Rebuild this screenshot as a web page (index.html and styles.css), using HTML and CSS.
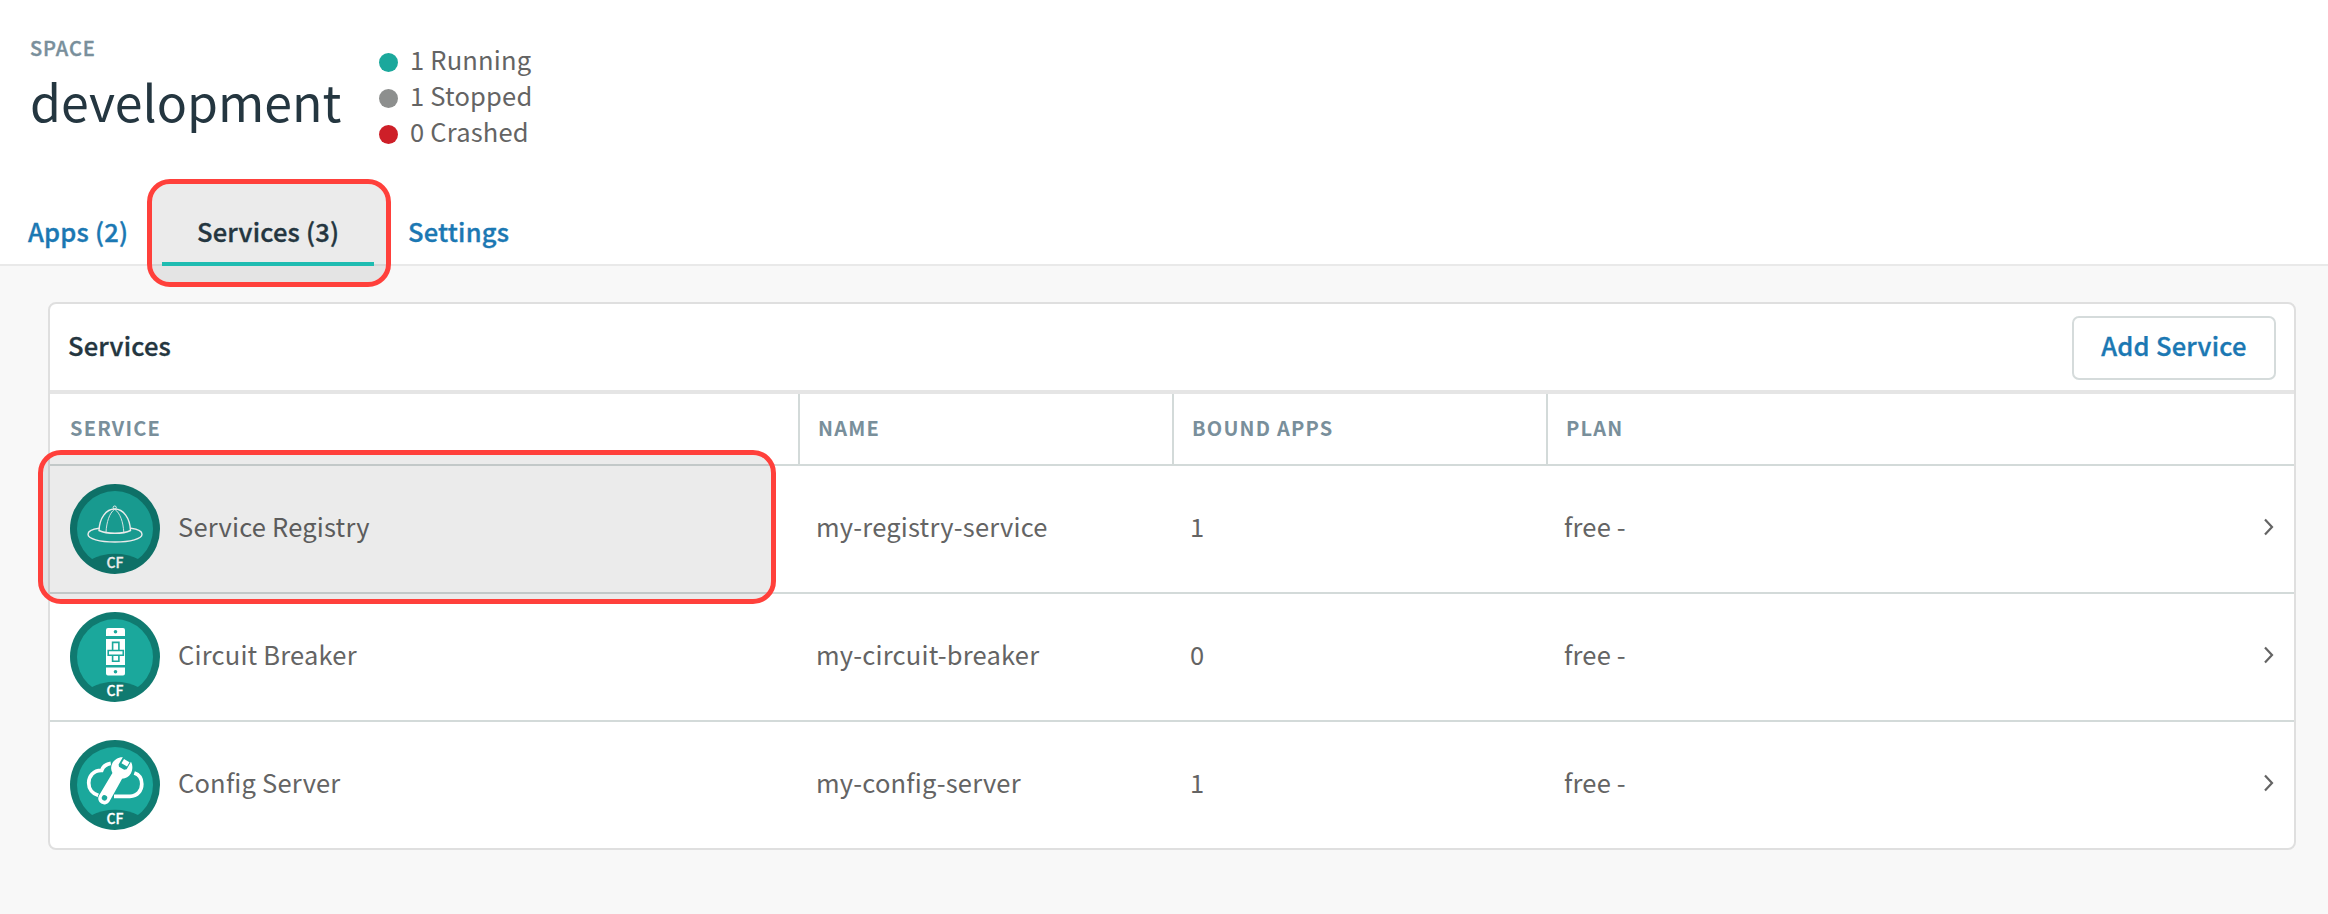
FILE: index.html
```html
<!DOCTYPE html>
<html lang="en">
<head>
<meta charset="utf-8">
<title>development</title>
<link rel="stylesheet" href="styles.css">
</head>
<body>
<header class="header">
  <div class="summary">
    <div class="space">
      <div class="space-label"><span>SPACE</span></div>
      <h1 class="space-name"><span>development</span></h1>
    </div>
    <ul class="statuses">
      <li class="status"><i class="dot dot-running"></i><span>1 Running</span></li>
      <li class="status"><i class="dot dot-stopped"></i><span>1 Stopped</span></li>
      <li class="status"><i class="dot dot-crashed"></i><span>0 Crashed</span></li>
    </ul>
  </div>
  <nav class="tabs">
    <a class="tab tab-apps"><span>Apps (2)</span></a>
    <a class="tab tab-active"><span>Services (3)</span><i class="callout callout-tab"></i></a>
    <a class="tab tab-settings"><span>Settings</span></a>
  </nav>
</header>
<main class="main">
  <section class="panel">
    <div class="panel-head">
      <h2 class="panel-title"><span>Services</span></h2>
      <button class="add"><span>Add Service</span></button>
    </div>
    <div class="row head-row">
      <div class="th"><span>SERVICE</span></div>
      <div class="th"><span>NAME</span></div>
      <div class="th"><span>BOUND APPS</span></div>
      <div class="th"><span>PLAN</span></div>
    </div>
    <div class="row item">
      <div class="td service">
        <svg class="badge" viewBox="0 0 90 90">
          <circle cx="45" cy="45" r="45" fill="#107a70"/>
          <circle cx="45" cy="45" r="38" fill="#1ba89c"/>
          <path d="M21 75.5C35 67.8 55 67.8 69 75.5L60 86H30z" fill="#107a70"/>
          <g fill="none" stroke="#fff">
            <path stroke-width="1.4" d="M29.2 44.2C22.5 45 18 47.300 18 50.200C18 54.800 29.500 58 45 58S72 54.800 72 50.200C72 47.300 67.500 45 60.800 44.200"/>
            <path stroke-width="1.400" d="M29 46.500C29.500 34 36 25 44.700 25S60 34 60.500 46.500C53 50.200 37 50.200 29 46.500z"/>
            <path stroke-width=".9" d="M36 48.500C36.500 38 39.500 29 44.300 25.500M53.800 48.500C53.300 38 50 29 45 25.500"/>
            <circle cx="44.700" cy="23.600" r="1.600" stroke-width="1"/>
          </g>
          <text class="badge-text" x="45" y="84.200">CF</text>
        </svg>
        <span>Service Registry</span>
        <i class="callout callout-row"></i>
      </div>
      <div class="td"><span>my-registry-service</span></div>
      <div class="td"><span>1</span></div>
      <div class="td"><span>free -</span></div>
      <svg class="chevron" viewBox="0 0 12 18"><path d="M2 1.500L9 9L2 16.500"/></svg>
    </div>
    <div class="row item">
      <div class="td service">
        <svg class="badge" viewBox="0 0 90 90">
          <circle cx="45" cy="45" r="45" fill="#107a70"/>
          <circle cx="45" cy="45" r="38" fill="#1ba89c"/>
          <path d="M21 75.5C35 67.8 55 67.8 69 75.5L60 86H30z" fill="#107a70"/>
          <path fill="#fff" d="M38 16H53Q55 16 55 18V24H36V18Q36 16 38 16zM36 27H55V53H36zM36 55.500H55V61.500Q55 63.500 53 63.500H38Q36 63.500 36 61.500z"/>
          <circle cx="45.500" cy="19.800" r="1.800" fill="#1ba89c"/>
          <circle cx="45.500" cy="59.700" r="1.800" fill="#1ba89c"/>
          <path fill="none" stroke="#1ba89c" stroke-width="1.600" d="M42.600 38.500V30.400H48.900V38.500M42.600 43.300V49.300H48.900V43.300M38.200 38.500H53.300V43.300H38.200z"/>
          <text class="badge-text" x="45" y="84.200">CF</text>
        </svg>
        <span>Circuit Breaker</span>
      </div>
      <div class="td"><span>my-circuit-breaker</span></div>
      <div class="td"><span>0</span></div>
      <div class="td"><span>free -</span></div>
      <svg class="chevron" viewBox="0 0 12 18"><path d="M2 1.500L9 9L2 16.500"/></svg>
    </div>
    <div class="row item">
      <div class="td service">
        <svg class="badge" viewBox="0 0 90 90">
          <circle cx="45" cy="45" r="45" fill="#107a70"/>
          <circle cx="45" cy="45" r="38" fill="#1ba89c"/>
          <path d="M21 75.5C35 67.8 55 67.8 69 75.5L60 86H30z" fill="#107a70"/>
          <path fill="none" stroke="#fff" stroke-width="3.700" d="M40.800 23.300C36 24 33 26.500 31.700 30.300C23.500 30 18.700 36.500 18.700 43C18.700 49 22.500 53.800 28.500 55.500M44 56.300H60C67.500 56.300 71.800 50.500 71.800 44C71.800 38.500 69 34.500 64.300 33"/>
          <g transform="translate(51.500 28.500) rotate(30)">
            <path fill="#fff" stroke="#1ba89c" stroke-width="1.500" paint-order="stroke" d="M-4.500 -10.500C-8.500 -8.500 -10.800 -4 -10.600 0C-10.400 4 -8.500 6.500 -5.600 8.500L-6 34.500A6 6 0 0 0 6 34.500L5.600 8.500C8.800 6.500 10.600 3.500 10.600 0C10.600 -4 8.500 -8.500 4.800 -10.500L4.800 -2L3 -.2H-3L-4.500 -2z"/>
            <rect x="-2.600" y="-9.500" width="6.400" height="5" fill="#fff"/>
            <circle cx="0" cy="34" r="2.700" fill="#1ba89c"/>
          </g>
          <text class="badge-text" x="45" y="84.200">CF</text>
        </svg>
        <span>Config Server</span>
      </div>
      <div class="td"><span>my-config-server</span></div>
      <div class="td"><span>1</span></div>
      <div class="td"><span>free -</span></div>
      <svg class="chevron" viewBox="0 0 12 18"><path d="M2 1.500L9 9L2 16.500"/></svg>
    </div>
  </section>
</main>
</body>
</html>
```
FILE: styles.css
```css
* { box-sizing: border-box; margin: 0; padding: 0; }
body {
  height: 914px;
  overflow: hidden;
  background: #f8f8f8;
  color: #646464;
  font-family: "Noto Sans CJK SC", "Open Sans", sans-serif;
  font-size: 25.5px;
  letter-spacing: .2px;
  line-height: 36px;
}
i { display: block; }
.header { height: 266px; background: #fff; border-bottom: 2px solid #e9e9e9; }
.summary { display: flex; height: 200px; padding: 33px 0 0 30px; }
.space { width: 349px; }
.space-label { height: 30px; line-height: 30px; font-size: 20px; font-weight: 500; letter-spacing: .9px; color: #798f9b; -webkit-text-stroke: .4px; }
.space-name { line-height: 92px; font-size: 50px; font-weight: 400; letter-spacing: 0; color: #243640; margin-top: -9px; }
.statuses { list-style: none; padding-top: 8px; }
.status { display: flex; align-items: center; gap: 12px; height: 36px; }
.dot { width: 19px; height: 19px; border-radius: 50%; margin-top: 6px; }
.dot-running { background: #1ba89c; }
.dot-stopped { background: #8d8f8e; }
.dot-crashed { background: #ce1f28; }
.tabs { display: flex; height: 66px; font-weight: 500; color: #1b78b3; -webkit-text-stroke: .35px; }
.tab { position: relative; height: 66px; line-height: 61px; }
.tab-apps { width: 162px; padding-left: 28px; }
.tab-active { z-index: 1; width: 212px; padding-left: 35px; color: #243640; }
.tab-active::after { content: ""; position: absolute; left: 0; right: 0; bottom: 0; height: 4px; background: #1fbcb1; }
.tab-settings { padding-left: 34px; }
.callout {
  position: absolute;
  z-index: 2;
  border: 5px solid #ff403b;
  border-radius: 23px;
  background: rgba(0, 0, 0, .08);
  background-clip: padding-box;
}
.callout-tab { left: -15px; top: -21px; width: 244px; height: 108px; z-index: -1; }
.callout-row { left: -12px; top: -16px; width: 738px; height: 154px; }
.main { padding: 36px 32px 0 48px; }
.panel { height: 548px; background: #fff; border: 2px solid #dfdfdf; border-radius: 8px; }
.panel-head { display: flex; justify-content: space-between; height: 90px; padding: 12px 18px 0 18px; border-bottom: 4px solid #e5e5e5; }
.panel-title { font-size: 25.5px; line-height: 58px; font-weight: 500; color: #243640; -webkit-text-stroke: .35px; }
.add {
  width: 204px;
  height: 64px;
  border: 2px solid #d5dbdb;
  border-radius: 7px;
  background: #fff;
  color: #1b78b3;
  font: 500 25.5px/54px "Noto Sans CJK SC", "Open Sans", sans-serif;
  letter-spacing: .25px;
  -webkit-text-stroke: .35px;
  padding-bottom: 6px;
}
.row { position: relative; display: grid; grid-template-columns: 748px 374px 374px 1fr; }
.head-row { height: 72px; border-bottom: 2px solid #d3dad9; color: #798f9b; font-size: 20px; font-weight: 700; letter-spacing: 1.2px; line-height: 68px; }
.th { padding-left: 18px; border-left: 2px solid #d3dad9; }
.th:first-child { border-left: 0; padding-left: 20px; }
.item { height: 128px; grid-template-columns: 748px 374px 374px 1fr 36px; border-bottom: 2px solid #d3dad9; line-height: 119px; }
.item:last-child { border-bottom: 0; }
.td { padding-left: 18px; }
.service { position: relative; display: flex; gap: 18px; padding-left: 20px; }
.badge { width: 90px; height: 90px; margin-top: 18px; }
.badge-text { fill: #fff; font-size: 14px; font-weight: 500; letter-spacing: 0; text-anchor: middle; stroke: #fff; stroke-width: .3px; }
.chevron { width: 12px; height: 18px; margin: 52px 0 0 5px; fill: none; stroke: #646464; stroke-width: 2.200; }
```
